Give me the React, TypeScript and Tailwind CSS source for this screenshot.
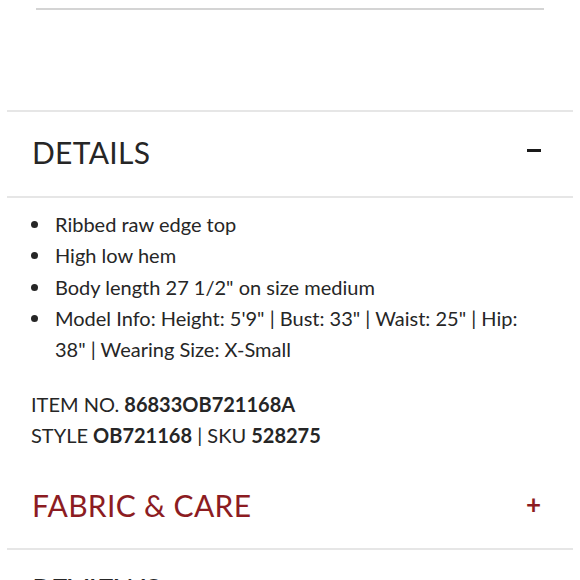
import React from 'react';

const details = [
  'Ribbed raw edge top',
  'High low hem',
  'Body length 27 1/2" on size medium',
  'Model Info: Height: 5\'9" | Bust: 33" | Waist: 25" | Hip: 38" | Wearing Size: X-Small',
];

const App = () => {
  return (
    <div className="h-[580px] overflow-hidden bg-white px-[7px] font-['Lato',sans-serif] text-[#262626]">
      <div className="mx-[29px] mt-[8px] h-[2px] bg-[#d4d4d4]" />

      <div className="mt-[100px] border-t-2 border-[#e6e6e6]">
        <div className="flex h-[86px] items-center justify-between border-b-2 border-[#e6e6e6] pb-[4px] pl-[25px] pr-[32px]">
          <h2 className="text-[30px] leading-none tracking-[0.3px]">DETAILS</h2>
          <span className="mb-[4px] block h-[3px] w-[14px] bg-[#1a1a1a]" />
        </div>

        <div className="pl-[24px] pr-[20px] pt-[11px]">
          <ul className="text-[20px] leading-[31.3px]">
            {details.map((item, i) => (
              <li key={i} className="flex">
                <span className="flex h-[31.3px] w-[24px] shrink-0 items-center">
                  <span className="block h-[7px] w-[7px] rounded-full bg-[#262626]" />
                </span>
                <span>{item}</span>
              </li>
            ))}
          </ul>

          <div className="mt-[24px] text-[20px] leading-[31px]">
            <p>ITEM NO. <span className="font-bold">86833OB721168A</span></p>
            <p>
              STYLE <span className="font-bold">OB721168</span> | SKU <span className="font-bold">528275</span>
            </p>
          </div>
        </div>

        <div className="mt-[11px] flex h-[88px] items-center justify-between border-b-2 border-[#e6e6e6] pl-[25px] pr-[32px] text-[#8c1c22]">
          <h2 className="text-[30px] leading-none tracking-[0.3px]">FABRIC &amp; CARE</h2>
          <span className="mb-[3px] text-[26px] font-bold leading-none">+</span>
        </div>

        <div className="pl-[25px] pt-[24px] text-[30px] leading-none">
          REVIEWS
        </div>
      </div>
    </div>
  );
};

export default App;
